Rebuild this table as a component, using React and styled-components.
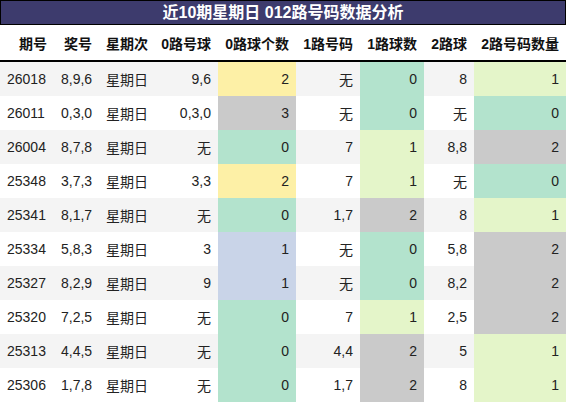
import styled, { createGlobalStyle } from "styled-components";

const GlobalStyle = createGlobalStyle`
  html, body {
    margin: 0;
    padding: 0;
    background: #ffffff;
  }
  body {
    font-family: "Liberation Sans", Arial, "Noto Sans CJK SC", sans-serif;
  }
`;

const Pagina = styled.div`
  width: 566px;
  overflow: hidden;
`;

const Titolo = styled.div`
  height: 23px;
  border: 1px solid #000;
  background: #3d3b6d;
  color: #fff;
  font-weight: bold;
  font-size: 16px;
  line-height: 23px;
  text-align: center;
`;

const Tabella = styled.table`
  width: 566px;
  border-collapse: collapse;
  table-layout: fixed;
  font-size: 14px;
  color: #222;
`;

const Intestazione = styled.th`
  height: 35px;
  padding: 0 7px 0 0;
  text-align: right;
  font-weight: bold;
  color: #111;
  background: #fff;
  border-bottom: 2px solid #000;
  white-space: nowrap;
`;

const Riga = styled.tr`
  background: ${(props) => (props.$pari ? "#ffffff" : "#f4f4f4")};
`;

const colori = {
  giallo: "#fdf0a6",
  grigio: "#cacaca",
  verde: "#b3e3cd",
  chiaro: "#e4f5c9",
  blu: "#c9d4e8",
};

const Cella = styled.td`
  height: 34px;
  padding: ${(props) => (props.$sinistra ? "0 0 0 7px" : "0 7px 0 0")};
  text-align: ${(props) => (props.$sinistra ? "left" : "right")};
  background: ${(props) => (props.$colore ? colori[props.$colore] : "transparent")};
  white-space: nowrap;
`;

const larghezze = [54, 45, 56, 63, 78, 64, 64, 50, 92];
const titoli = ["期号", "奖号", "星期次", "0路号球", "0路球个数", "1路号码", "1路球数", "2路球", "2路号码数量"];

// periodo, numeri, 0路号球, conteggio0, colore0, 1路号码, conteggio1, colore1, 2路球, conteggio2, colore2
const dati = [
  ["26018", "8,9,6", "9,6", "2", "giallo", "无", "0", "verde", "8", "1", "chiaro"],
  ["26011", "0,3,0", "0,3,0", "3", "grigio", "无", "0", "verde", "无", "0", "verde"],
  ["26004", "8,7,8", "无", "0", "verde", "7", "1", "chiaro", "8,8", "2", "grigio"],
  ["25348", "3,7,3", "3,3", "2", "giallo", "7", "1", "chiaro", "无", "0", "verde"],
  ["25341", "8,1,7", "无", "0", "verde", "1,7", "2", "grigio", "8", "1", "chiaro"],
  ["25334", "5,8,3", "3", "1", "blu", "无", "0", "verde", "5,8", "2", "grigio"],
  ["25327", "8,2,9", "9", "1", "blu", "无", "0", "verde", "8,2", "2", "grigio"],
  ["25320", "7,2,5", "无", "0", "verde", "7", "1", "chiaro", "2,5", "2", "grigio"],
  ["25313", "4,4,5", "无", "0", "verde", "4,4", "2", "grigio", "5", "1", "chiaro"],
  ["25306", "1,7,8", "无", "0", "verde", "1,7", "2", "grigio", "8", "1", "chiaro"],
];

export default function App() {
  return (
    <Pagina>
      <GlobalStyle />
      <Titolo>近10期星期日 012路号码数据分析</Titolo>
      <Tabella>
        <colgroup>
          {larghezze.map((w, i) => (
            <col key={i} style={{ width: w }} />
          ))}
        </colgroup>
        <thead>
          <tr>
            {titoli.map((t) => (
              <Intestazione key={t}>{t}</Intestazione>
            ))}
          </tr>
        </thead>
        <tbody>
          {dati.map((r, i) => (
            <Riga key={r[0]} $pari={i % 2 === 1}>
              <Cella $sinistra>{r[0]}</Cella>
              <Cella $sinistra>{r[1]}</Cella>
              <Cella $sinistra>星期日</Cella>
              <Cella>{r[2]}</Cella>
              <Cella $colore={r[4]}>{r[3]}</Cella>
              <Cella>{r[5]}</Cella>
              <Cella $colore={r[7]}>{r[6]}</Cella>
              <Cella>{r[8]}</Cella>
              <Cella $colore={r[10]}>{r[9]}</Cella>
            </Riga>
          ))}
        </tbody>
      </Tabella>
    </Pagina>
  );
}
